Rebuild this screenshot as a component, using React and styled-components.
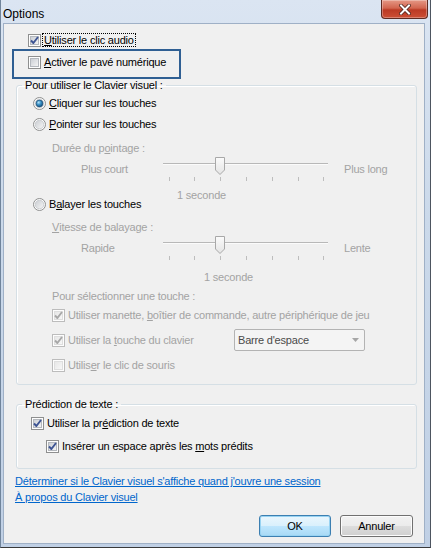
import styled, { createGlobalStyle } from "styled-components";

const GlobalStyle = createGlobalStyle`
  html, body {
    margin: 0;
    padding: 0;
    background: #fff;
  }
  body {
    font-family: "Liberation Sans", Arial, sans-serif;
    font-size: 11px;
    letter-spacing: -0.2px;
    color: #000;
  }
`;

const Window = styled.div`
  width: 431px;
  height: 548px;
  box-sizing: border-box;
  display: flex;
  flex-direction: column;
  background: linear-gradient(180deg, #dbe5f2 0%, #cbd9ea 40%, #c0d0e5 100%);
  border: 1px solid #70849b;
  border-top: none;
  border-right-color: #4d5560;
  border-bottom-color: #3a3a3a;
`;

const TitleBar = styled.div`
  height: 23px;
  flex-shrink: 0;
  display: flex;
  align-items: flex-start;
`;

const Title = styled.div`
  font-size: 12px;
  letter-spacing: 0;
  line-height: 14px;
  padding: 7px 0 0 2px;
`;

const CloseButton = styled.div`
  margin-left: auto;
  margin-right: 2px;
  width: 47px;
  height: 19px;
  box-sizing: border-box;
  display: flex;
  align-items: center;
  justify-content: center;
  border: 1px solid #5e2b22;
  border-top: none;
  border-radius: 0 0 4px 4px;
  background: linear-gradient(180deg, #e59886 0%, #d2654f 45%, #bb3a24 55%, #cc4f35 100%);
  box-shadow: inset 0 0 0 1px rgba(255, 255, 255, 0.3);
`;

const Client = styled.div`
  flex: 1;
  position: relative;
  display: flex;
  flex-direction: column;
  margin: 0 5px 3px 2px;
  border: 1px solid #9fb0c6;
  background: #f0f0f0;
`;

const Highlight = styled.div`
  position: absolute;
  left: 8px;
  top: 25px;
  width: 169px;
  height: 30px;
  box-sizing: border-box;
  border: 2px solid #2f5f93;
  pointer-events: none;
`;

const Row = styled.div`
  display: flex;
  align-items: center;
  height: ${(p) => p.$h || 20}px;
  margin-top: ${(p) => p.$mt || 0}px;
  padding-left: ${(p) => p.$pl || 0}px;
  line-height: 14px;
  white-space: nowrap;
  color: ${(p) => (p.$off ? "#a3a3a3" : "#000")};
`;

const Label = styled.span`
  margin-left: 3px;
  color: ${(p) => (p.$off ? "#a3a3a3" : "#000")};
  width: ${(p) => (p.$w ? `${p.$w}px` : "auto")};
`;

const Focus = styled.span`
  margin-left: 2px;
  padding: 0 1px;
  line-height: 12px;
  outline: 1px dotted #000;
`;

const Group = styled.fieldset`
  margin: ${(p) => p.$mt}px 7px 0 12px;
  padding: 0 0 ${(p) => p.$pb}px 0;
  min-inline-size: 0;
  border: 1px solid #d5dfe5;
  border-radius: 3px;
  box-shadow: inset 1px 1px 0 #fff;
`;

const Legend = styled.legend`
  margin-left: 5px;
  padding: 0 3px;
  line-height: 14px;
`;

const SliderRow = styled.div`
  display: grid;
  grid-template-columns: 82px 166px auto;
  align-items: start;
  height: 25px;
  margin-top: 2px;
  padding-left: 64px;
  color: #a3a3a3;
  line-height: 14px;
  white-space: nowrap;

  span {
    margin-top: 5px;
  }
  span:last-child {
    margin-left: 15px;
  }
`;

const Combo = styled.div`
  width: 131px;
  height: 22px;
  box-sizing: border-box;
  display: flex;
  align-items: center;
  justify-content: space-between;
  padding: 0 5px 0 3px;
  border: 1px solid #b3b3b3;
  border-radius: 2px;
  background: #f4f4f4;
  color: #4a4a4a;
`;

const Link = styled.a`
  color: #0066cc;
  text-decoration: underline;
  cursor: pointer;
`;

const ButtonBar = styled.div`
  display: flex;
  justify-content: flex-end;
  gap: 9px;
  margin: 11px 11px 0 0;
`;

const Button = styled.button`
  width: ${(p) => p.$w}px;
  height: 22px;
  padding: 0;
  font-family: inherit;
  font-size: 11px;
  letter-spacing: inherit;
  color: #000;
  border-radius: 3px;
  border: 1px solid ${(p) => (p.$default ? "#3c7fb1" : "#707070")};
  background: ${(p) =>
    p.$default
      ? "linear-gradient(180deg, #eaf6fd 0%, #d9f0fc 50%, #bee6fd 51%, #a7d9f5 100%)"
      : "linear-gradient(180deg, #f2f2f2 0%, #ebebeb 50%, #dddddd 51%, #cfcfcf 100%)"};
  box-shadow: inset 0 0 0 1px ${(p) => (p.$default ? "#98d3f2" : "#fcfcfc")};
`;

const Checkbox = ({ checked, off }) => (
  <svg width="13" height="13" viewBox="0 0 13 13" style={{ flexShrink: 0 }}>
    <defs>
      <linearGradient id={off ? "cbOff" : "cbOn"} x1="0" y1="0" x2="1" y2="1">
        <stop offset="0" stopColor={off ? "#e6e6e6" : "#c9cdd3"} />
        <stop offset="1" stopColor={off ? "#f8f8f8" : "#f6f6f6"} />
      </linearGradient>
    </defs>
    <rect x="0.5" y="0.5" width="12" height="12" fill="#fdfdfd" stroke={off ? "#bcbcbc" : "#8e8f8f"} />
    <rect x="2.5" y="2.5" width="8" height="8" fill={`url(#${off ? "cbOff" : "cbOn"})`} stroke={off ? "#dedede" : "#b4b8be"} />
    {checked && (
      <path
        d="M3 6.5 L5.4 9 L10 3"
        fill="none"
        stroke={off ? "#a8a8a8" : "#3d5493"}
        strokeWidth="1.9"
        strokeLinejoin="round"
      />
    )}
  </svg>
);

const Radio = ({ checked }) => (
  <svg width="13" height="13" viewBox="0 0 13 13" style={{ flexShrink: 0 }}>
    <defs>
      <linearGradient id="rdBg" x1="0" y1="0" x2="1" y2="1">
        <stop offset="0" stopColor="#c9ccd1" />
        <stop offset="1" stopColor="#f7f7f7" />
      </linearGradient>
      <radialGradient id="rdDot" cx="0.38" cy="0.35" r="0.7">
        <stop offset="0" stopColor="#b6e3fa" />
        <stop offset="0.45" stopColor="#3c93c7" />
        <stop offset="1" stopColor="#0f4d7c" />
      </radialGradient>
    </defs>
    <circle cx="6.5" cy="6.5" r="6" fill="#fcfcfc" stroke="#8e8f8f" />
    <circle cx="6.5" cy="6.5" r="4.3" fill="url(#rdBg)" stroke="#c2c5ca" strokeWidth="0.8" />
    {checked && <circle cx="6.5" cy="6.5" r="3.4" fill="url(#rdDot)" stroke="#1c4f78" strokeWidth="0.7" />}
  </svg>
);

const SliderTrack = () => (
  <svg width="166" height="25" viewBox="0 0 166 25">
    <defs>
      <linearGradient id="thumb" x1="0" y1="0" x2="0" y2="1">
        <stop offset="0" stopColor="#fbfbfb" />
        <stop offset="1" stopColor="#e4e4e4" />
      </linearGradient>
    </defs>
    <line x1="0" y1="6.5" x2="165" y2="6.5" stroke="#b8b8b8" />
    <line x1="0" y1="7.5" x2="165" y2="7.5" stroke="#fbfbfb" />
    {[6, 31, 57, 83, 109, 135, 160].map((x) => (
      <line key={x} x1={x + 0.5} y1="20" x2={x + 0.5} y2="24" stroke="#bdbdbd" />
    ))}
    <path d="M52.5 0.5 H61.5 V13 L57 17.5 L52.5 13 Z" fill="url(#thumb)" stroke="#a8a8a8" />
  </svg>
);

const App = () => (
  <>
    <GlobalStyle />
    <Window>
      <TitleBar>
        <Title>Options</Title>
        <CloseButton>
          <svg width="12" height="11" viewBox="0 0 12 11">
            <path d="M2 1.5 L10 9.5 M10 1.5 L2 9.5" stroke="#4a2119" strokeWidth="3.6" strokeLinecap="square" />
            <path d="M2 1.5 L10 9.5 M10 1.5 L2 9.5" stroke="#fff" strokeWidth="2" strokeLinecap="square" />
          </svg>
        </CloseButton>
      </TitleBar>

      <Client>
        <Row $h={22} $mt={5} $pl={24}>
          <Checkbox checked />
          <Focus>
            <u>U</u>tiliser le clic audio
          </Focus>
        </Row>
        <Row $h={22} $pl={24}>
          <Checkbox />
          <Label>
            <u>A</u>ctiver le pavé numérique
          </Label>
        </Row>

        <Group $mt={5} $pb={9}>
          <Legend>Pour utiliser le Clavier visuel :</Legend>
          <Row $h={22} $pl={16}>
            <Radio checked />
            <Label>
              <u>C</u>liquer sur les touches
            </Label>
          </Row>
          <Row $h={20} $pl={16}>
            <Radio />
            <Label>
              <u>P</u>ointer sur les touches
            </Label>
          </Row>
          <Row $h={14} $mt={7} $pl={35} $off>
            Durée du p<u>o</u>intage :
          </Row>
          <SliderRow>
            <span>Plus court</span>
            <SliderTrack />
            <span>Plus long</span>
          </SliderRow>
          <Row $h={14} $mt={6} $pl={160} $off>
            1 seconde
          </Row>
          <Row $h={14} $mt={-5} $pl={16}>
            <Radio />
            <Label>
              B<u>a</u>layer les touches
            </Label>
          </Row>
          <Row $h={14} $mt={9} $pl={35} $off>
            <u>V</u>itesse de balayage :
          </Row>
          <SliderRow>
            <span>Rapide</span>
            <SliderTrack />
            <span>Lente</span>
          </SliderRow>
          <Row $h={14} $mt={9} $pl={187} $off>
            1 seconde
          </Row>
          <Row $h={14} $mt={5} $pl={35} $off>
            Pour sélectionner une touche :
          </Row>
          <Row $h={20} $mt={2} $pl={35}>
            <Checkbox checked off />
            <Label $off>
              Utiliser manette, <u>b</u>oîtier de commande, autre périphérique de jeu
            </Label>
          </Row>
          <Row $h={22} $mt={4} $pl={35}>
            <Checkbox checked off />
            <Label $off $w={166}>
              Utiliser la <u>t</u>ouche du clavier
            </Label>
            <Combo>
              <span>Barre d'espace</span>
              <svg width="7" height="4" viewBox="0 0 7 4">
                <path d="M0 0 H7 L3.5 4 Z" fill="#a6a6a6" />
              </svg>
            </Combo>
          </Row>
          <Row $h={20} $mt={4} $pl={35}>
            <Checkbox off />
            <Label $off>
              Utilis<u>e</u>r le clic de souris
            </Label>
          </Row>
        </Group>

        <Group $mt={12} $pb={12}>
          <Legend>Prédiction de texte :</Legend>
          <Row $h={20} $mt={2} $pl={14}>
            <Checkbox checked />
            <Label>
              Utiliser la pr<u>é</u>diction de texte
            </Label>
          </Row>
          <Row $h={20} $mt={3} $pl={29}>
            <Checkbox checked />
            <Label>
              Insérer un espace après les <u>m</u>ots prédits
            </Label>
          </Row>
        </Group>

        <Row $h={14} $mt={5} $pl={11}>
          <Link>Déterminer si le Clavier visuel s'affiche quand j'ouvre une session</Link>
        </Row>
        <Row $h={14} $mt={2} $pl={11}>
          <Link>À propos du Clavier visuel</Link>
        </Row>

        <ButtonBar>
          <Button $default $w={72}>OK</Button>
          <Button $w={73}>Annuler</Button>
        </ButtonBar>

        <Highlight />
      </Client>
    </Window>
  </>
);

export default App;
